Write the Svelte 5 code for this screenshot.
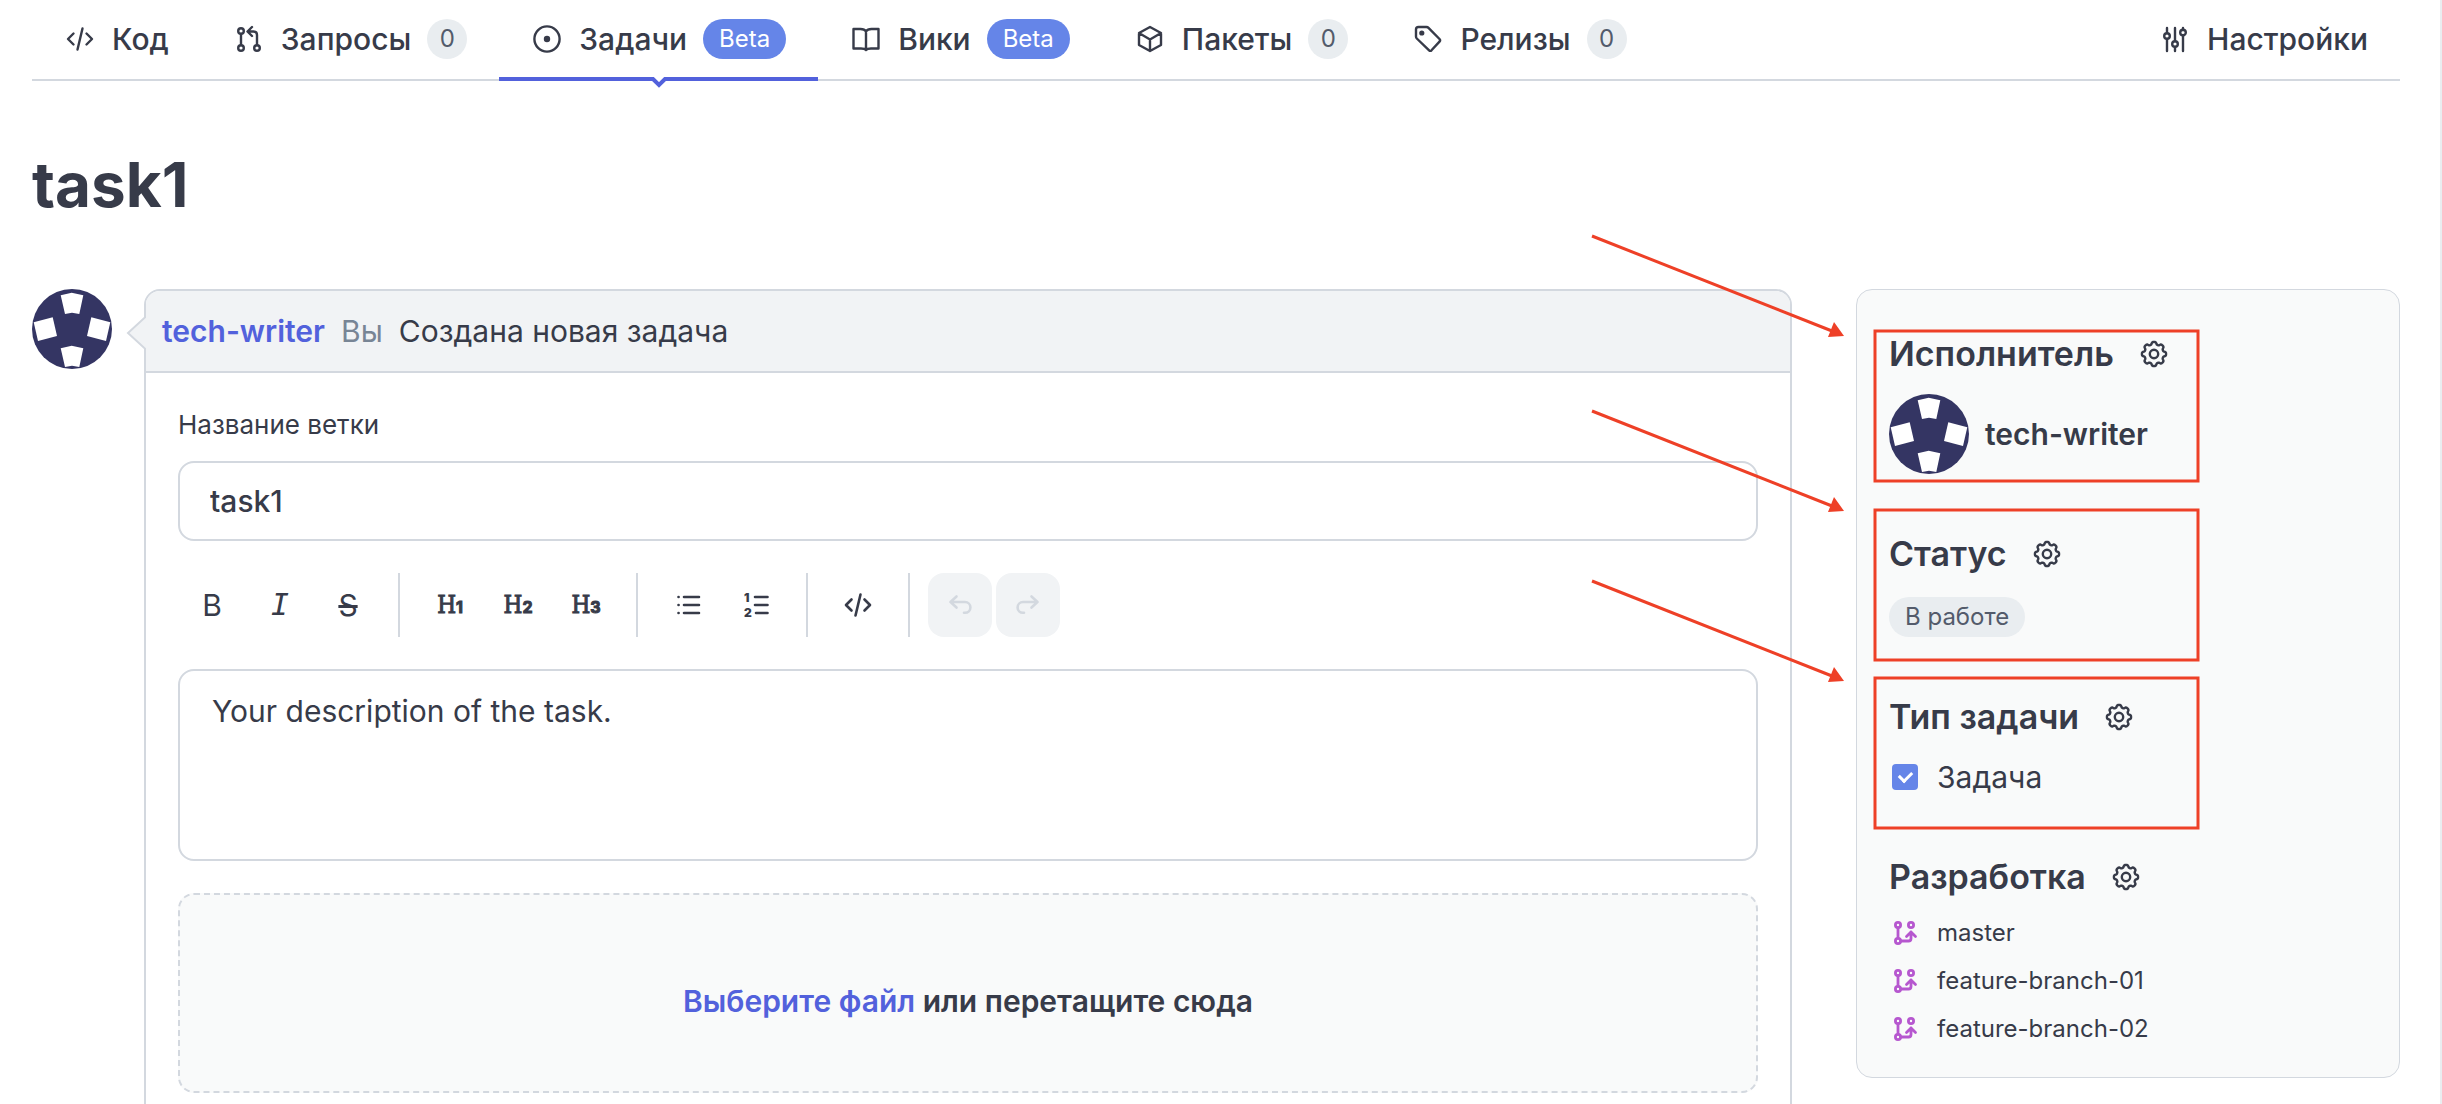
<script lang="ts">
  type Tab = { icon: string; label: string; badge?: string; beta?: boolean; active?: boolean };

  const tabs: Tab[] = [
    { icon: 'code', label: 'Код' },
    { icon: 'pull', label: 'Запросы', badge: '0' },
    { icon: 'issue', label: 'Задачи', badge: 'Beta', beta: true, active: true },
    { icon: 'book', label: 'Вики', badge: 'Beta', beta: true },
    { icon: 'package', label: 'Пакеты', badge: '0' },
    { icon: 'tag', label: 'Релизы', badge: '0' }
  ];

  const branches = ['master', 'feature-branch-01', 'feature-branch-02'];

  // callouts over the sidebar: top of the frame and start of its arrow
  const marks = [
    { y: 100, arrow: 6 },
    { y: 279, arrow: 181 },
    { y: 447, arrow: 351 }
  ];

  let title = $state('task1');
  let description = $state('Your description of the task.');
  let isTask = $state(true);

  function gearPath() {
    const points: string[] = [];
    for (let i = 0; i < 160; i++) {
      const a = (i / 160) * Math.PI * 2;
      const c = Math.cos(a * 8);
      const r = 10.8 + 1.3 * Math.tanh(c * 1.8 + 0.3);
      points.push(`${(16 + r * Math.cos(a)).toFixed(2)} ${(16 + r * Math.sin(a)).toFixed(2)}`);
    }
    return `M${points.join('L')}Z`;
  }

  const gear = gearPath();
</script>

{#snippet icon(name: string)}
  <svg class="icon" viewBox="0 0 32 32" aria-hidden="true">
    {#if name === 'code'}
      <path d="M9.5 10.5 4 16l5.5 5.5M22.5 10.5 28 16l-5.5 5.5M18.5 5.5l-5 21" />
    {:else if name === 'pull'}
      <circle cx="8" cy="8" r="2.8" />
      <circle cx="8" cy="25" r="2.8" />
      <circle cx="24" cy="25" r="2.8" />
      <path d="M8 11v11M24 22V12q0-3.5-3.5-3.5H15M19 4l-4.5 4.5L19 13" />
    {:else if name === 'issue'}
      <circle cx="16" cy="16" r="12.6" />
      <circle cx="16" cy="16" r="2" fill="currentColor" />
    {:else if name === 'book'}
      <path d="M16 8.5C15 6.8 13 6 10.5 6H3.5v19.5h7.500c2 0 4 .2 5 1.500 1-1.300 3-1.500 5-1.500h7.500V6h-7C19 6 17 6.8 16 8.5V26" />
    {:else if name === 'package'}
      <path d="M16 4 5 10v12l11 6 11-6V10ZM5 10l11 6.5L27 10M16 16.5V28" />
    {:else if name === 'tag'}
      <path d="M4 6.5Q4 4 6.5 4h8q1.200 0 2 .8L27.500 16q1.200 1.300 0 2.600l-8 8.700q-1.200 1.200-2.400 0L4.800 15.500Q4 14.700 4 13.500Z" />
      <circle cx="9.8" cy="10" r="1.4" fill="currentColor" />
    {:else if name === 'sliders'}
      <path d="M8 5v5M8 16v12M16 5v13M16 24v4M24 5v2M24 12.5V28" />
      <circle cx="8" cy="13" r="2.8" />
      <circle cx="16" cy="21" r="2.8" />
      <circle cx="24" cy="9.5" r="2.8" />
    {:else if name === 'gear'}
      <path d={gear} />
      <circle cx="16" cy="16" r="4.2" />
    {:else if name === 'branch'}
      <circle cx="9" cy="8" r="2.6" />
      <circle cx="22" cy="8" r="2.6" />
      <circle cx="9" cy="24" r="2.6" />
      <path d="M9 11v10M12 24h7.500q2.500 0 2.500-2.500V15M17.500 19.500l4.500-4.500 4.500 4.500" />
    {:else if name === 'bullets'}
      <path d="M12 8h15M12 16h15M12 24h15M6.500 8h.1M6.500 16h.1M6.500 24h.1" />
    {:else if name === 'numbers'}
      <path d="M15 8h12.500M15 16h12.500M16 24h11.500" />
      <text x="4" y="13">1</text>
      <text x="4" y="28">2</text>
    {:else if name === 'undo'}
      <path d="M12.500 7.500 6.500 13l6 5.500M6.500 13H21a5.400 5.400 0 0 1 0 10.800h-1" />
    {:else if name === 'redo'}
      <path d="m19.500 7.500 6 5.500-6 5.500M25.500 13H11a5.400 5.400 0 0 0 0 10.800h1" />
    {/if}
  </svg>
{/snippet}

{#snippet avatar()}
  <svg class="avatar" viewBox="0 0 80 80" role="img" aria-label="tech-writer">
    <circle cx="40" cy="40" r="40" fill="#343563" />
    <g fill="#fff">
      <path d="M28.700 6.300 39.700 3.700l11.600 2.600L47.300 25 40 23.700 33 25Z" />
      <path d="M28.700 59.300l11-2.600 11.600 2.600L47.300 78 40 76.700 33 78Z" />
      <path d="M1.700 33.300l19-5L25 47 6 52Z" />
      <path d="M59.300 28.300l19 5L74 52l-19-5Z" />
    </g>
  </svg>
{/snippet}

{#snippet heading(text: string)}
  <h2>
    {text}
    <button type="button" class="gear" aria-label="Изменить">{@render icon('gear')}</button>
  </h2>
{/snippet}

<div class="page">
  <nav>
    {#each tabs as tab}
      <a href="#tab" class="tab" class:active={tab.active}>
        {@render icon(tab.icon)}
        <span>{tab.label}</span>
        {#if tab.badge}
          <span class="badge" class:beta={tab.beta}>{tab.badge}</span>
        {/if}
        {#if tab.active}
          <svg class="notch" viewBox="0 0 20 12" aria-hidden="true">
            <path d="M0 0H20V4H0Z" fill="#fff" />
            <path d="M0 2H4L10 8 16 2H20" fill="none" stroke="#5261dc" stroke-width="4" />
          </svg>
        {/if}
      </a>
    {/each}
    <a href="#settings" class="tab settings">
      {@render icon('sliders')}
      <span>Настройки</span>
    </a>
  </nav>

  <h1>task1</h1>

  <div class="columns">
    {@render avatar()}

    <main>
      <header>
        <svg class="pointer" viewBox="0 0 20 36" aria-hidden="true">
          <path d="M20 1.500 2 18l18 16.500" />
        </svg>
        <a href="#user">tech-writer</a>
        <span class="you">Вы</span>
        <span>Создана новая задача</span>
      </header>

      <form>
        <label class="caption" for="branch-name">Название ветки</label>
        <input id="branch-name" class="field" type="text" bind:value={title} />

        <div class="toolbar">
          <button type="button" class="letter" aria-label="Жирный">B</button>
          <button type="button" class="letter italic" aria-label="Курсив">I</button>
          <button type="button" class="letter strike" aria-label="Зачёркнутый">S</button>
          <span class="divider"></span>
          {#each [1, 2, 3] as level}
            <button type="button" class="level">H<b>{level}</b></button>
          {/each}
          <span class="divider"></span>
          <button type="button" aria-label="Список">{@render icon('bullets')}</button>
          <button type="button" aria-label="Нумерованный список">{@render icon('numbers')}</button>
          <span class="divider"></span>
          <button type="button" aria-label="Код">{@render icon('code')}</button>
          <span class="divider"></span>
          <button type="button" disabled aria-label="Отменить">{@render icon('undo')}</button>
          <button type="button" disabled aria-label="Повторить">{@render icon('redo')}</button>
        </div>

        <textarea class="field" aria-label="Описание" bind:value={description}></textarea>

        <div class="dropzone">
          <input id="file" type="file" />
          <p><label for="file">Выберите файл</label> или перетащите сюда</p>
        </div>
      </form>
    </main>

    <aside>
      <section>
        {@render heading('Исполнитель')}
        <div class="person">
          {@render avatar()}
          <span>tech-writer</span>
        </div>
      </section>

      <section>
        {@render heading('Статус')}
        <span class="badge status">В работе</span>
      </section>

      <section>
        {@render heading('Тип задачи')}
        <label class="type">
          <input type="checkbox" bind:checked={isTask} />
          Задача
        </label>
      </section>

      <section>
        {@render heading('Разработка')}
        <ul>
          {#each branches as branch}
            <li>{@render icon('branch')}<span>{branch}</span></li>
          {/each}
        </ul>
      </section>

      <svg class="marks" viewBox="0 0 620 620" aria-hidden="true">
        {#each marks as mark}
          <rect x="294" y={mark.y + 1} width="323" height="150" />
          <path d="M11 {mark.arrow}l240 95" />
          <path class="head" d="M263 {mark.arrow + 100}l-10-14-6 15Z" />
        {/each}
      </svg>
    </aside>
  </div>
</div>

<style>
  :global(body) {
    margin: 0;
    background: #fff;
  }

  .page {
    box-sizing: border-box;
    height: 100vh;
    overflow: hidden;
    padding: 0 40px 0 32px;
    border-right: 2px solid #e9edf0;
    color: #373b49;
    font-family: Inter, 'Noto Sans', sans-serif;
    font-size: 30px;
    line-height: 40px;
  }

  .page * {
    box-sizing: border-box;
  }

  a {
    color: inherit;
    text-decoration: none;
  }

  button,
  input,
  textarea {
    color: inherit;
    font: inherit;
  }

  .icon {
    flex: none;
    width: 32px;
    height: 32px;
    fill: none;
    stroke: currentColor;
    stroke-width: 2.4;
    stroke-linecap: round;
    stroke-linejoin: round;
  }

  .icon text {
    fill: currentColor;
    stroke: none;
    font-size: 12px;
    font-weight: 900;
  }

  .avatar {
    flex: none;
    width: 80px;
    height: 80px;
  }

  /* tabs */
  nav {
    display: flex;
    height: 81px;
    border-bottom: 2px solid #d3d8df;
  }

  .tab {
    position: relative;
    display: flex;
    align-items: center;
    gap: 16px;
    height: 81px;
    padding: 0 32px 4px;
    font-weight: 500;
  }

  .tab.active {
    padding-bottom: 0;
    border-bottom: 4px solid #5261dc;
  }

  .settings {
    margin-left: auto;
  }

  .notch {
    position: absolute;
    left: calc(50% - 10px);
    top: 77px;
    width: 20px;
    height: 12px;
  }

  .badge {
    min-width: 40px;
    height: 40px;
    border-radius: 20px;
    background: #e9edf0;
    color: #535b6b;
    font-size: 24px;
    font-weight: 400;
    text-align: center;
  }

  .badge.beta {
    padding: 0 16px;
    background: #6585e8;
    color: #fff;
  }

  h1 {
    margin: 64px 0;
    font-size: 62px;
    font-weight: 700;
    line-height: 80px;
  }

  .columns {
    display: flex;
    align-items: flex-start;
  }

  /* task card */
  main {
    flex: 1;
    min-width: 0;
    margin: 0 64px 0 32px;
    border: 2px solid #d3d8df;
    border-radius: 16px;
  }

  header {
    position: relative;
    display: flex;
    align-items: center;
    gap: 16px;
    height: 82px;
    padding: 0 16px;
    border-bottom: 2px solid #d3d8df;
    border-radius: 14px 14px 0 0;
    background: #f1f3f5;
  }

  header a {
    color: #5261dc;
    font-weight: 600;
  }

  .you {
    color: #788595;
  }

  .pointer {
    position: absolute;
    left: -20px;
    top: 24px;
    width: 20px;
    height: 36px;
    fill: #f1f3f5;
    stroke: #d3d8df;
    stroke-width: 2;
  }

  form {
    display: flex;
    flex-direction: column;
    padding: 32px;
  }

  .caption {
    margin-bottom: 16px;
    font-size: 26px;
  }

  .field {
    width: 100%;
    height: 80px;
    padding: 0 30px;
    border: 2px solid #d3d8df;
    border-radius: 16px;
    background: #fff;
    outline: none;
    font-weight: 500;
  }

  textarea.field {
    display: block;
    height: 192px;
    padding: 16px 32px;
    font-weight: 400;
    line-height: 48px;
    resize: none;
  }

  .toolbar {
    display: flex;
    margin: 32px 0;
  }

  .toolbar button {
    display: flex;
    align-items: center;
    justify-content: center;
    width: 64px;
    height: 64px;
    margin: 0 2px;
    padding: 0;
    border: 0;
    border-radius: 16px;
    background: none;
  }

  .toolbar button:disabled {
    background: #f1f3f5;
    color: #d3d8df;
  }

  .toolbar .icon {
    stroke-width: 2.6;
  }

  .toolbar .letter {
    font-weight: 400;
  }

  .toolbar .italic {
    font-family: 'DejaVu Sans Mono', monospace;
    font-style: italic;
  }

  .toolbar .strike {
    text-decoration: line-through;
  }

  .toolbar .level {
    align-items: baseline;
    font-family: 'DejaVu Serif Condensed', 'DejaVu Serif', serif;
    font-size: 24px;
    line-height: 64px;
    -webkit-text-stroke: 1px currentColor;
  }

  .level b {
    font-family: Inter, sans-serif;
    font-size: 16px;
    font-weight: 700;
  }

  .divider {
    width: 2px;
    margin: 0 16px;
    background: #d3d8df;
  }

  .dropzone {
    display: flex;
    align-items: center;
    justify-content: center;
    height: 200px;
    margin-top: 32px;
    padding-top: 16px;
    border: 2px dashed #d3d8df;
    border-radius: 16px;
    background: #f9fafa;
    font-weight: 600;
  }

  .dropzone input {
    display: none;
  }

  .dropzone p {
    margin: 0;
  }

  .dropzone label {
    color: #5261dc;
  }

  /* sidebar */
  aside {
    position: relative;
    display: flex;
    flex: none;
    flex-direction: column;
    gap: 56px;
    width: 544px;
    padding: 40px 32px 24px;
    border: 1px solid #d3d8df;
    border-radius: 16px;
    background: #f9fafa;
  }

  h2 {
    display: flex;
    align-items: center;
    gap: 24px;
    margin: 0;
    font-size: 34px;
    font-weight: 600;
    line-height: 48px;
  }

  .gear {
    display: flex;
    padding: 0;
    border: 0;
    background: none;
  }

  .person {
    display: flex;
    align-items: center;
    gap: 16px;
    margin-top: 16px;
    font-weight: 600;
  }

  .status {
    display: block;
    width: fit-content;
    margin-top: 19px;
    padding: 0 16px;
  }

  .type {
    display: flex;
    align-items: center;
    gap: 19px;
    margin-top: 16px;
  }

  .type input {
    appearance: none;
    display: grid;
    place-items: center;
    width: 26px;
    height: 26px;
    margin: 0 0 0 3px;
    border-radius: 4px;
    background: #e9edf0;
  }

  .type input:checked {
    background: #6585e8;
  }

  .type input:checked::after {
    content: '';
    width: 10px;
    height: 6px;
    margin-bottom: 3px;
    border: solid #fff;
    border-width: 0 0 3px 3px;
    transform: rotate(-45deg);
  }

  ul {
    margin: 8px 0 0;
    padding: 0;
    list-style: none;
    font-size: 24px;
  }

  li {
    display: flex;
    align-items: center;
    gap: 16px;
    height: 48px;
  }

  li .icon {
    color: #b657cf;
    stroke-width: 2.8;
  }

  .marks {
    position: absolute;
    left: -276px;
    top: -60px;
    width: 620px;
    height: 620px;
    fill: none;
    stroke: #ee4027;
    stroke-width: 3;
    pointer-events: none;
  }

  .head {
    fill: #ee4027;
    stroke: none;
  }
</style>
